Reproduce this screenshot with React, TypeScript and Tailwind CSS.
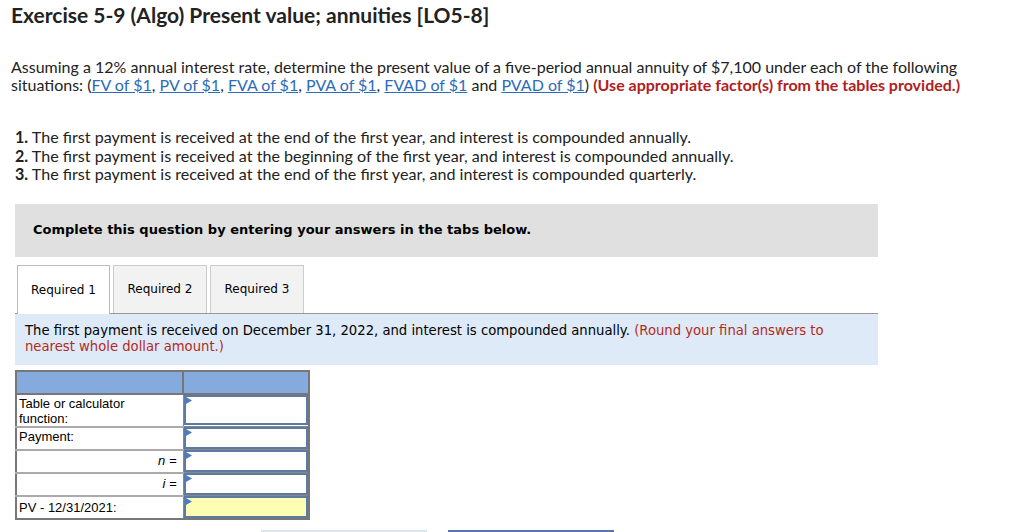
import React from "react"

const links = ["FV of $1", "PV of $1", "FVA of $1", "PVA of $1", "FVAD of $1"]

function Marker() {
  return (
    <svg className="absolute left-0 top-0" width="6" height="8" viewBox="0 0 6 8">
      <polygon points="0,0 6,3.5 0,7" fill="#4a7cc4" />
    </svg>
  )
}

function InputCell({ yellow = false, tall = false }: { yellow?: boolean; tall?: boolean }) {
  return (
    <td className="border border-[#888] p-0 align-top">
      <div
        className={`relative border-2 border-[#5d7aa3] ${yellow ? "bg-[#ffffb3]" : "bg-white"} ${tall ? "h-[30px]" : "h-[22px]"}`}
      >
        <Marker />
      </div>
    </td>
  )
}

export default function App() {
  return (
    <div className="w-[1024px] h-[532px] overflow-hidden bg-white text-[#222]" style={{ fontFamily: "Lato, 'Open Sans', sans-serif" }}>
      <div className="pl-[11px] pt-[2px]">
        <h1 className="text-[21px] font-bold text-[#222] leading-[26px]">Exercise 5-9 (Algo) Present value; annuities [LO5-8]</h1>

        <p className="mt-[30px] text-[16px] leading-[18px] pr-[50px]">
          Assuming a 12% annual interest rate, determine the present value of a five-period annual annuity of $7,100 under each of the following situations:{" "}
          (
          {links.map((l, i) => (
            <React.Fragment key={l}>
              <a className="text-[#2b6cb8] underline">{l}</a>
              {i < links.length - 1 ? ", " : " "}
            </React.Fragment>
          ))}
          and <a className="text-[#2b6cb8] underline">PVAD of $1</a>){" "}
          <span className="font-bold text-[#b0201c]">(Use appropriate factor(s) from the tables provided.)</span>
        </p>

        <ol className="mt-[34px] pl-[4px] text-[16.1px] leading-[18.5px]">
          <li><b>1.</b> The first payment is received at the end of the first year, and interest is compounded annually.</li>
          <li><b>2.</b> The first payment is received at the beginning of the first year, and interest is compounded annually.</li>
          <li><b>3.</b> The first payment is received at the end of the first year, and interest is compounded quarterly.</li>
        </ol>
      </div>

      <div className="ml-[15px] w-[863px]" style={{ fontFamily: "'DejaVu Sans', Verdana, sans-serif" }}>
        <div className="mt-[20px] h-[53px] bg-[#e0e0e0] pl-[18px] pt-[13px]">
          <span className="text-[13px] font-bold text-black">Complete this question by entering your answers in the tabs below.</span>
        </div>

        <div className="mt-[8px] flex items-end gap-[3px] pl-[2px] border-b border-[#999] h-[49px]">
          <div className="w-[93px] border border-b-0 border-[#bbb] bg-white flex items-center justify-center text-[12px] text-black -mb-px h-[49px]">Required 1</div>
          <div className="w-[94px] h-[48px] border border-b-0 border-[#ccc] bg-[#f2f2f2] flex items-center justify-center text-[12px] text-black">Required 2</div>
          <div className="w-[94px] h-[48px] border border-b-0 border-[#ccc] bg-[#f2f2f2] flex items-center justify-center text-[12px] text-black">Required 3</div>
        </div>

        <div className="h-[51px] bg-[#deeaf7] pl-[10px] pt-[9px] text-[13.2px] leading-[16px] text-black pr-[35px]">
          The first payment is received on December 31, 2022, and interest is compounded annually.{" "}
          <span className="text-[#b22a22]">(Round your final answers to nearest whole dollar amount.)</span>
        </div>

        <table className="mt-[5px] border-collapse border-2 border-[#777] text-[13px] text-black" style={{ fontFamily: "'Liberation Sans', Arial, sans-serif" }}>
          <tbody>
            <tr className="h-[23px] bg-[#84aade]">
              <td className="w-[167px] border-2 border-[#777]" />
              <td className="w-[126px] border-2 border-[#777]" />
            </tr>
            <tr>
              <td className="border-b-2 border-[#aaa] px-[2px] leading-[15px] align-top pt-[1px]">Table or calculator<br />function:</td>
              <InputCell tall />
            </tr>
            <tr>
              <td className="border-b-2 border-[#aaa] px-[2px] align-top pt-[1px] leading-[16px]">Payment:</td>
              <InputCell />
            </tr>
            <tr>
              <td className="border-b-2 border-[#aaa] px-[6px] text-right italic leading-[16px]">n =</td>
              <InputCell />
            </tr>
            <tr>
              <td className="border-b-2 border-[#aaa] px-[6px] text-right italic leading-[16px]">i =</td>
              <InputCell />
            </tr>
            <tr>
              <td className="px-[2px] pt-[1px] leading-[16px]">PV - 12/31/2021:</td>
              <InputCell yellow />
            </tr>
          </tbody>
        </table>
      </div>

      <div className="mt-[10px] flex gap-[21px] pl-[261px]">
        <div className="w-[166px] h-[20px] border-t-2 border-[#dde4ec] bg-[#f4f7fb]" />
        <div className="w-[166px] h-[20px] border-t-2 border-[#5577aa] bg-[#e8eef7]" />
      </div>
    </div>
  )
}
